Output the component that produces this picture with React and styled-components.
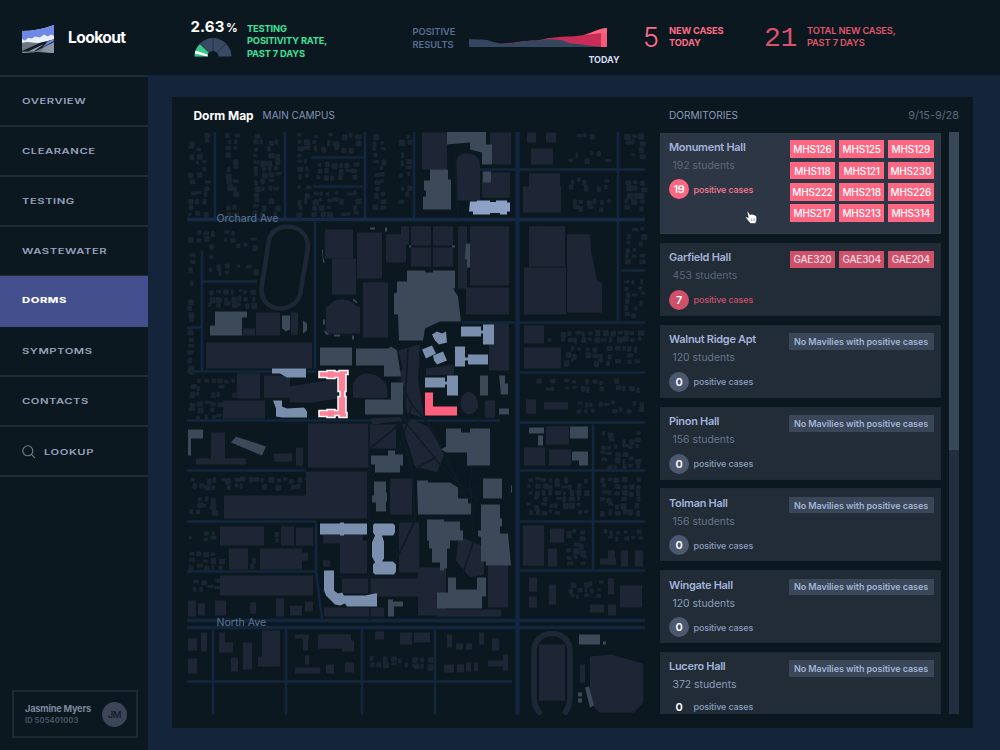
import React from "react";
import styled, { createGlobalStyle } from "styled-components";

const GlobalStyle = createGlobalStyle`
  * { box-sizing: border-box; }
  body { margin: 0; background: #0c1820; font-family: Inter, "Liberation Sans", sans-serif; overflow: hidden; }
`;

const Page = styled.div`
  width: 1000px; height: 750px; display: grid;
  grid-template: 75px 675px / 148px 852px; background: #0c1820;
  white-space: nowrap;
`;
const Brand = styled.div`
  display: flex; align-items: center; padding: 4px 0 0 22px; gap: 14px;
`;
const BrandName = styled.span`
  color: #fff; font-size: 15.6px; font-weight: 700; letter-spacing: -0.6px; line-height: 20px; margin-top: -3px;
`;
const Stats = styled.header`
  display: flex; align-items: flex-start; padding-left: 42px;
`;
const Rate = styled.div`
  width: 57px; padding-top: 16.5px; display: flex; flex-direction: column; align-items: flex-start;
`;
const RateValue = styled.div`
  color: #fff; font-size: 15px; font-weight: 700; letter-spacing: 0.15px; line-height: 19px; padding-left: 0.5px;
  height: 21px; small { font-size: 11.5px; margin-left: 1.5px; }
`;
const StatLabel = styled.div`
  font-size: 9.3px; font-weight: ${(p) => p.$weight || 700}; line-height: 12.6px;
  letter-spacing: ${(p) => p.$ls ?? -0.15}px; white-space: pre;
  color: ${(p) => p.$color}; width: ${(p) => p.$w}px; padding-top: ${(p) => p.$top}px;
`;
const Trend = styled.div`
  width: 175px; padding-top: 26px; display: flex; flex-direction: column;
`;
const Today = styled.div`
  color: #d3dcf5; font-size: 9px; font-weight: 700; line-height: 12px; padding: 6px 0 0 119.5px; letter-spacing: -0.1px;
`;
const Count = styled.div`
  font: ${(p) => (p.$mono ? '400 28px/30px "Liberation Mono", monospace' : '300 27px/30px Inter, sans-serif')};
  color: ${(p) => p.$color}; width: ${(p) => p.$w}px; padding-top: ${(p) => (p.$mono ? 24 : 22.5)}px;
  margin-left: ${(p) => (p.$mono ? 0 : -1)}px;
  letter-spacing: ${(p) => (p.$mono ? "-0.4px" : 0)};
`;

const Sidebar = styled.nav`
  display: flex; flex-direction: column; border-top: 2px solid #212c36; width: 148px;
`;
const NavItem = styled.div`
  height: ${(p) => (p.$active ? 51 : 50)}px; margin-top: ${(p) => (p.$active ? -1 : 0)}px;
  padding: ${(p) => (p.$low ? 2 : 0)}px 0 0 22px; display: flex; align-items: center; gap: 8px;
  border-bottom: 2px solid ${(p) => (p.$active ? "#434f8b" : "#212c36")};
  background: ${(p) => (p.$active ? "#43508d" : "transparent")};
  color: ${(p) => (p.$active ? "#fff" : "#97a2bd")};
`;
const NavText = styled.span`
  font-size: 7.5px; font-weight: ${(p) => (p.$active ? 800 : 600)}; letter-spacing: 0.35px;
  transform: scaleX(1.5); transform-origin: left center; line-height: 12px; padding-top: 1px;
`;
const User = styled.div`
  margin: auto 10px 12px 12px; height: 48px; border: 2px solid #1e2a33;
  display: flex; align-items: center; padding: 0 9px 0 11px; justify-content: space-between;
`;
const UserName = styled.div`
  color: #7c869c; font-size: 9.2px; font-weight: 700; line-height: 13px; letter-spacing: -0.2px;
`;
const UserId = styled.div`
  color: #485262; font-size: 7.5px; font-weight: 700; line-height: 12px; letter-spacing: 0.1px;
`;
const Avatar = styled.div`
  width: 25px; height: 25px; border-radius: 50%; background: #3d4559; color: #141e29;
  font-size: 9.5px; font-weight: 600; display: grid; place-items: center; letter-spacing: -0.3px;
`;

const Main = styled.main`
  background: #13243b; padding: 22px 27px 22px 24px;
`;
const Panel = styled.section`
  width: 801px; height: 631px; background: #0b1820; display: flex; padding-left: 8px;
`;
const MapColumn = styled.div` width: 480px; `;
const MapHeader = styled.div`
  height: 35px; padding: 0 0 0 13.5px; display: flex; align-items: center; gap: 9px;
`;
const Title = styled.h1`
  margin: 0; color: #fff; font-size: 12px; font-weight: 700; letter-spacing: -0.05px; padding-top: 1px;
`;
const SubTitle = styled.span`
  color: ${(p) => p.$color || "#8492b8"}; font-size: ${(p) => p.$size || 10}px;
  letter-spacing: ${(p) => p.$ls || 0}px; padding-top: 1px;
`;
const MapSvg = styled.svg` display: block; `;
const Side = styled.div` width: 299px; `;
const SideHeader = styled.div`
  height: 35px; padding: 0 0 0 9px; display: flex; align-items: center; justify-content: space-between;
`;
const ScrollArea = styled.div`
  display: flex; justify-content: space-between; height: 581.5px; overflow: hidden;
`;
const List = styled.div`
  width: 281px; display: flex; flex-direction: column; gap: 8.75px; padding-top: 1px;
`;
const Track = styled.div` width: 10px; background: #232f40; `;
const Thumb = styled.div` height: 318px; background: #394857; `;

const Card = styled.article`
  flex: none; height: ${(p) => (p.$hover ? 101.3 : 73)}px; background: ${(p) => (p.$hover ? "#2d3644" : "#212c37")};
  box-shadow: inset 0 0 0 1px ${(p) => (p.$hover ? "#313c49" : "#1e2b34")};
  display: flex; justify-content: space-between; padding: ${(p) => (p.$low ? 7.7 : 7)}px 7.5px 0 9px;
`;
const DormName = styled.div`
  color: #a3b3d9; font-size: 11px; font-weight: 600; line-height: 14px; letter-spacing: -0.3px;
`;
const Students = styled.div`
  color: ${(p) => p.$color}; font-size: 10.4px; line-height: 14px; padding: 0 0 0 3.5px; margin-top: 4.8px;
`;
const Cases = styled.div`
  display: flex; align-items: center; gap: 4.5px; height: 20px; margin-top: ${(p) => p.$top}px;
  font-size: 9px; font-weight: 500; letter-spacing: -0.13px; color: ${(p) => p.$color};
`;
const CaseCount = styled.span`
  width: 20px; height: 20px; border-radius: 50%; background: ${(p) => p.$bg}; color: #fff;
  font-size: 11px; font-weight: 600; display: grid; place-items: center; letter-spacing: -0.3px;
`;
const Rooms = styled.div`
  display: grid; grid-template-columns: repeat(3, 45.4px); column-gap: 3.8px; row-gap: 3.5px;
  grid-auto-rows: ${(p) => (p.$hover ? 17.9 : 16.8)}px; margin-top: ${(p) => (p.$hover ? 0.2 : 1)}px;
`;
const Room = styled.div`
  background: ${(p) => p.$bg}; color: ${(p) => p.$color}; font-size: 10px; letter-spacing: -0.2px;
  display: grid; place-items: center; font-weight: 500;
`;
const NoCases = styled.div`
  width: 145px; height: 16.5px; margin-top: 1px; background: #3a4758; color: #a3b4d6; font-size: 9px; font-weight: 600;
  display: grid; place-items: center; letter-spacing: -0.06px;
`;
const CursorSvg = styled.svg` position: absolute; left: 744px; top: 209px; `;
const GaugeSvg = styled.svg` margin-left: 3.5px; `;

const Logo = () => (
  <svg width="32" height="29" viewBox="0 0 32 29">
    <path d="M0 6Q16 6 32 0V28Q16 26 0 28Z" fill="#eaf0fb" />
    <path d="M0 6Q16 6 32 0V11L29 9.500L26 11.500L22 9.500L18 12.500L13 11.500L10 13.500L6 13L3 15.500L0 14Z" fill="#6f8ae6" />
    <path d="M0 18C6 16 10 18 15 18C21 18 26 16 32 14V28Q16 26 0 28Z" fill="#6d7683" />
    <path d="M26 17L32 14.500V28Q26 26.500 19 26.500Z" fill="#8b95a8" />
    <path d="M19 17.500L32 14.500V17L13 26.500H0V26Z" fill="#111c26" />
    <path d="M24 17L32 14V16L20 22.500L25 17.500Z" fill="#6b86dd" />
    <path d="M6 26.500L22 19L12 26.500Z" fill="#8b95a5" />
  </svg>
);

const Gauge = () => (
  <GaugeSvg width="38" height="19" viewBox="0 0 38 19">
    <path d="M0.500 18.500A18.500 18.500 0 0 1 37.500 18.500H24.500A5.500 5.500 0 0 0 13.500 18.500Z" fill="#394a64" />
    <path d="M0.500 18.500A18.500 18.500 0 0 1 6 6L14.500 14A6 6 0 0 0 13.500 18.500Z" fill="#36c987" />
    <path d="M1.500 12.500L13.600 16.500V18.500L0.800 15.500Z" fill="#fff" />
    <g stroke="#1d2a39" strokeWidth=".8">
      <path d="M6 5.500L15 14.500M19 0V13M32 5.500L23 14.500" />
    </g>
  </GaugeSvg>
);

const TrendChart = () => (
  <svg width="138" height="22" viewBox="469 26 138 22">
    <path d="M500 44C512 43 524 41 532 40.500C540 41 545 38 552 37.700C566 36 576 37 586 34.500C594 32 600 28 607 28V47H500Z" fill="#c72d57" />
    <path d="M584 35C594 32 600 28 607 28V33H601Q594 34 584 35Z" fill="#ff6480" />
    <path d="M469 39C478 40 483 38.500 489 40.500C495 43 500 43.500 508 43.500C518 43 522 41 530 40.800C540 41 545 39 552 39.300C560 39.500 566 41 570 43.500C580 43.500 584 46 601 46.500V47H469Z" fill="#35465f" />
    <path d="M601 30L607 28V47H601Z" fill="#ff6480" opacity=".85" />
  </svg>
);

const SearchIcon = () => (
  <svg width="14" height="14" viewBox="0 0 14 14" fill="none" stroke="#747e88" strokeWidth="1.1">
    <circle cx="5.800" cy="5.800" r="5" />
    <path d="M9.400 9.400L12.800 12.800" />
  </svg>
);

// Blocks filled with a scatter of small houses: x, y, width, height
const HOUSE_BLOCKS = [
  [188, 132, 19, 82], [225, 132, 14, 82], [252, 132, 26, 82], [296, 132, 12, 82], [312, 132, 46, 18], [316, 160, 42, 20],
  [311, 190, 50, 24], [372, 132, 11, 80], [398, 132, 11, 82], [188, 229, 24, 10], [208, 229, 50, 16], [187, 252, 9, 120],
  [208, 253, 8, 20], [216, 262, 42, 10], [208, 288, 50, 16],
  [188, 377, 48, 18], [188, 400, 32, 18], [190, 476, 118, 14], [188, 495, 30, 18], [188, 529, 30, 14], [188, 550, 38, 16],
  [192, 578, 26, 10], [266, 530, 14, 12], [250, 550, 8, 16], [567, 132, 45, 8], [568, 150, 45, 10], [568, 177, 44, 14],
  [571, 198, 42, 10], [624, 132, 20, 28], [624, 178, 20, 32], [624, 226, 20, 38], [624, 278, 20, 38], [545, 329, 98, 9],
  [563, 345, 80, 20], [536, 378, 108, 14], [575, 400, 68, 12], [599, 430, 44, 35], [526, 476, 62, 40], [599, 476, 44, 40],
  [565, 528, 24, 38], [601, 528, 42, 14], [568, 580, 36, 20], [368, 655, 52, 15], [412, 655, 22, 15],
];
const HOUSES = (() => {
  let seed = 17;
  const next = () => ((seed = (seed * 16807) % 2147483647) / 2147483647);
  const out = [];
  HOUSE_BLOCKS.forEach(([x, y, w, h]) => {
    for (let cy = y; cy < y + h - 2; cy += 6.5) {
      for (let cx = x; cx < x + w - 3; cx += 7) {
        if (next() < 0.24) continue;
        out.push([cx + next() * 3, cy + next() * 2.5, 3 + next() * 3.5, 3 + next() * 3.5]);
      }
    }
  });
  return out;
})();

const ROADS = [
  "M215 131V218M285 131V218M365 131V218M414 131V218", "M311 157H365M313 186H363", "M202 250V371M202 281H257M315 221V368",
  "M187 371H316M187 327H202M187 420H500M187 470H306M187 521H316M187 571H315M316 521V571L322 618",
  "M479 169H645M618 131V320M621 270H645M462 322H645M520 372H645M520 422H645M520 470H645M520 521H645M593 424V570M520 570H645",
  "M213 628V714M286 628V714M362 628V714M435 628V714M187 681H512",
];
const PATHS = [
  "M395 372L412 404L430 425L475 515M400 415L445 470L478 500M408 348L404 420L370 448M412 404L400 447L372 475",
  "M398 420L412 470L437 456M412 470L415 520L396 560M440 500L478 485M369 420V520H415M478 420L470 480L474 540L462 575",
  "M338 576H418M370 576V620M455 152L458 218M425 519H475",
];
// Lots and fields: x, y, width, height
const LOTS = [
  [422, 132, 25, 37], [490, 132, 21, 32], [482, 172, 28, 25], [529, 173, 31, 18], [523, 186, 38, 26], [531, 148, 22, 16],
  [527, 132, 9, 10], [546, 132, 10, 10], [325, 229, 28, 29], [332, 258, 24, 36], [357, 232, 25, 46], [386, 234, 20, 28],
  [401, 226, 8, 18], [411, 226, 20, 19], [433, 226, 20, 19], [411, 247, 20, 19], [433, 247, 20, 19], [458, 226, 9, 62],
  [470, 226, 39, 59], [466, 287, 43, 27], [529, 226, 36, 40], [524, 267, 42, 47], [363, 282, 25, 55], [326, 306, 34, 27],
  [256, 312, 24, 23], [291, 312, 7, 22], [243, 328, 12, 7], [206, 342, 106, 26], [237, 373, 23, 25], [264, 375, 26, 22],
  [223, 400, 42, 18], [353, 382, 33, 15], [211, 432, 14, 31], [196, 458, 50, 6], [296, 447, 7, 18], [274, 453, 18, 8],
  [308, 423, 60, 44], [306, 471, 61, 44], [224, 495, 143, 23], [370, 424, 26, 24], [390, 478, 22, 36], [489, 323, 20, 47],
  [485, 400, 10, 17], [524, 325, 20, 18], [524, 347, 37, 21], [526, 399, 10, 14], [544, 402, 24, 7], [546, 426, 23, 18],
  [524, 447, 21, 18], [549, 449, 22, 16], [220, 526, 44, 19], [281, 526, 13, 19], [296, 527, 17, 18], [229, 548, 19, 21],
  [260, 548, 42, 21], [302, 552, 6, 8], [220, 575, 93, 20], [340, 540, 27, 33], [323, 534, 40, 9], [323, 560, 7, 6],
  [342, 578, 26, 15], [370, 578, 50, 18], [324, 607, 60, 9], [399, 522, 20, 50], [488, 565, 20, 42], [418, 567, 28, 48],
  [437, 609, 64, 7], [523, 525, 21, 40], [550, 528, 14, 14], [548, 548, 9, 18], [600, 558, 16, 6], [608, 550, 7, 14],
  [621, 550, 7, 16], [635, 550, 8, 16], [529, 577, 8, 14], [529, 596, 8, 11], [549, 584, 7, 20], [608, 578, 6, 16],
  [620, 585, 22, 22], [590, 604, 14, 8], [608, 604, 8, 11], [188, 600, 8, 16], [198, 603, 7, 12], [215, 600, 11, 15],
  [250, 602, 6, 11], [276, 598, 8, 18], [290, 605, 12, 10], [305, 601, 8, 10], [188, 638, 9, 12], [201, 632, 6, 19],
  [219, 632, 6, 20], [225, 642, 8, 10], [188, 658, 9, 15], [231, 657, 7, 14], [243, 642, 9, 27], [262, 630, 18, 36],
  [258, 656, 10, 10], [295, 634, 14, 4], [303, 638, 5, 12], [305, 655, 4, 9], [295, 667, 25, 6], [326, 664, 8, 9],
  [318, 634, 33, 14], [342, 640, 12, 11], [345, 662, 9, 10], [375, 631, 9, 8], [400, 632, 12, 12], [414, 632, 16, 10],
  [447, 634, 5, 13], [456, 643, 7, 6], [466, 643, 6, 6], [479, 632, 5, 12], [492, 638, 7, 12], [488, 660, 20, 6],
  [503, 654, 5, 16], [444, 664, 10, 8], [457, 664, 7, 8], [466, 662, 5, 9], [474, 662, 4, 9], [580, 664, 5, 18],
];
const LOT_SHAPES = [
  "M456 164Q456 153 466 153Q480 153 480 166V200H456Z", "M326 312Q330 298 343 299Q356 300 360 312Z",
  "M353 385Q357 373 367 373Q383 374 387 388V397H353Z", "M290 386L338 378V398L312 402H290Z", "M543 226H565V240H543Z",
  "M567 234H590L591 250L594 265L597 280L602 283V312H567Z", "M468 391Q479 394 478 407Q472 418 463 411Q457 396 468 391Z",
  "M400 372L412 352L420 345L418 378L424 418L407 412Z", "M402 424L414 420L428 426L445 452L437 472L415 466Z",
  "M458 540L464 538L484 546L484 574L470 577L456 560Z", "M590 656L611 654L643 663V702L634 712H599L590 700Z",
  "M398 350L420 344L416 366L404 372Z", "M371 418L404 416V420L372 424Z", "M426 368L454 364V374L426 375Z",
];
// Academic buildings
const BUILDINGS = [
  "M447 131H486V144H492V164H482V152L470 149V142L447 144Z", "M430 169H448V179H451V209H423V196H426V190H424V180H430Z",
  "M483 171H491V182H483Z", "M466 243H470V267H467V259H465Z",
  "M407 270H425V272H433V270H455V288H453L458 296L461 321L440 321L425 328L423 340H399L398 314H394V293L397 292V281H407Z",
  "M215 311H247V317H242V335H210V325H215Z", "M282 315H290V329L286 331L282 328Z", "M303 320L307 323V330L303 333Z",
  "M320 347H352V365H320Z", "M356 348H388L391 346L397 350L401 376H384V365H356Z", "M391 382H403V414H365V399H391Z",
  "M188 429H203V438H191V455H188Z", "M236 436L266 446L262 455L231 442Z", "M480 375H488V395H480Z", "M499 375H505V383H508V394H501Z",
  "M499 408H509V414H499Z", "M446 428H461V432H470V428H490V465H467V452H447L441 449L446 446Z", "M483 478H502V498H483Z",
  "M417 480H428V482H450L458 487V498H468V503H471V514H418Z",
  "M371 455H388V450H395V454H403V465H400V472H375V464H371Z", "M374 481H386V492H387V501H386V511H376V502H372V495H374Z",
  "M427 519H444V521H460V530H463V540H450V548H447V568H444V570H440V562H432V548H429V540H427Z",
  "M481 504H500V518H502V526H500V533H508L511 565H486V561H481V536H478V530H481Z",
  "M448 577H456V589H477V577H486V596H482V608H437V592H448Z", "M529 427H544V433H529ZM538 435H543V445H538ZM570 426H588V438H570ZM572 451H588V465H579V460H572Z",
  "M388 599H393V601H403V606H394V616H388Z", "M579 634H600V644H579ZM585 687L589 686L594 705L590 707Z",
];
// Residence halls
const DORMS = [
  "M272 368H306V377H287L280 373H272Z", "M273 400H282V406L287 408L304 407L307 411V417H282L276 416V408Z",
  "M461 326H481V330H483V324H494V344H483V333H481V336H461Z", "M455 346H465V357H468V354H488V364H468V360H465V366H455Z",
  "M425 377H445V381H447V375H458V395H447V384H445V387H425Z",
  "M432 334L437 331L442 333L446 331L447 342L439 344L435 340Z", "M422 349L432 345L436 353L426 358Z", "M433 355L443 351L447 360L437 364L434 360Z",
  "M320 523H340V522H344V523H367V534H344V535H340V534H320Z",
  "M374 523H393L395 525V532L393 535H382L384 541V558L382 561H393L396 564V571L394 574H375L373 572V564L375 562L372 556V542L375 535L373 532V525Z",
  "M324 570H334V590L338 593L342 592L344 595H365L375 593H377V606H347L345 603L340 605L335 604L331 600L326 595L324 590Z",
];

const CampusMap = () => (
  <MapSvg width="475" height="583" viewBox="180 131.500 475 583">
    <g stroke="#12273d" fill="none" strokeWidth="2.500">
      {ROADS.map((d) => <path key={d} d={d} />)}
      <path d="M187 219H645" strokeWidth="3.500" stroke="#162a45" />
      <path d="M187 620H645M187 627H645" strokeWidth="3.500" />
      <path d="M517.500 131V714" strokeWidth="4.500" stroke="#13253f" />
    </g>
    <g fill="#1a2532">
      {HOUSES.map(([x, y, w, h], i) => <rect key={i} x={x} y={y} width={w} height={h} rx="1" />)}
    </g>
    <g fill="#1e2635">
      {LOTS.map(([x, y, w, h], i) => <rect key={i} x={x} y={y} width={w} height={h} />)}
      {LOT_SHAPES.map((d) => <path key={d} d={d} />)}
      <rect x="539" y="644" width="26" height="56" />
    </g>
    <g fill="none" stroke="#1d2736">
      <path d="M268.500 242C271 220 308 220 308 247L300.500 292C297 313 261 315 261.500 288Z" strokeWidth="4.500" />
      <path d="M541 714Q534 706 534 697V651C534 627 570 627 570 651V697Q570 706 564 714" strokeWidth="5.500" />
    </g>
    <g fill="none" stroke="#0f1b27" strokeWidth="1.800">{PATHS.map((d) => <path key={d} d={d} />)}</g>
    <g fill="#3b4958">
      {BUILDINGS.map((d) => <path key={d} d={d} />)}
      <path d="M370 227H375V229H370ZM385 227H387V231H385ZM409 245H411V247H409ZM452 245H455V247H452ZM353 298L357 301V303L353 300ZM323 319H325V324H323ZM323 329L326 334H330M334 334H340V336H334ZM352 335H354V339H352ZM578 692H582V696H578ZM578 698H582V702H578ZM603 641H606V644H603ZM511 485H512V492H511ZM322 249H323V256L325 262H323Z" />
    </g>
    <g fill="#7a8eae">
      {DORMS.map((d) => <path key={d} d={d} />)}
    </g>
    <path d="M470 201H477V200H490V201.500H496V200H507V202H510V211H507V214H500V212.500H490V214H473V211H469Z" fill="#8ca1c5" />
    <path
      d="M319 371H327V370H335V371H339V370H348V374H346V391H345V396H346V412H347V417H339V415H335V417H327V416H319V410H327V409H335V410H338V396H340V391H338V377H335V378H327V377H319Z"
      fill="#ff8197" stroke="#fff" strokeWidth="1.500"
    />
    <path d="M425 392H433V406H457V415H425Z" fill="#ff5f7d" />
    <g fontFamily="Inter, sans-serif" fontSize="10.600" fill="#5d7290">
      <text x="216.500" y="221.500">Orchard Ave</text>
      <text x="216.500" y="625.500">North Ave</text>
    </g>
  </MapSvg>
);

const Cursor = () => (
  <CursorSvg width="14" height="16" viewBox="0 0 14 16">
    <path d="M3 2.500C4.200 2 5 3.500 5.800 5.500L8 5.200L10 5.700L12.500 7L12.800 11L11.500 14.500H6.500L3 10.500L1.500 8.300C2 7.500 3.500 8 4.300 8.600Z" fill="#fff" stroke="#222c39" strokeWidth=".6" />
    <path d="M7.500 9.500V12M9.200 9.500V12M10.800 9.500V12" stroke="#7c8590" strokeWidth=".6" />
  </CursorSvg>
);

const NAV = ["OVERVIEW", "CLEARANCE", "TESTING", "WASTEWATER", "DORMS", "SYMPTOMS", "CONTACTS"];
const DORM_LIST = [
  { name: "Monument Hall", students: 192, cases: 19, hover: true, dot: "#ff6681", text: "#fb7a92", dim: "#5f697a", top: 6.5,
    rooms: ["MHS126", "MHS125", "MHS129", "MHS118", "MHS121", "MHS230", "MHS222", "MHS218", "MHS226", "MHS217", "MHS213", "MHS314"] },
  { name: "Garfield Hall", students: 453, cases: 7, dot: "#d05069", text: "#cf506b", dim: "#5c6778", rooms: ["GAE320", "GAE304", "GAE204"] },
  { name: "Walnut Ridge Apt", students: 120, cases: 0, dim: "#68758c" },
  { name: "Pinon Hall", students: 156, cases: 0, dim: "#68758c" },
  { name: "Tolman Hall", students: 156, cases: 0, dim: "#68758c" },
  { name: "Wingate Hall", students: 120, cases: 0, dim: "#8c9cbd" },
  { name: "Lucero Hall", students: 372, cases: 0, dim: "#8c9cbd", dot: "transparent", top: 4.5 },
];

export default function App() {
  return (
    <Page>
      <GlobalStyle />
      <Brand><Logo /><BrandName>Lookout</BrandName></Brand>
      <Stats>
        <Rate>
          <RateValue>2.63<small>%</small></RateValue>
          <Gauge />
        </Rate>
        <StatLabel $color="#3fe09a" $w={165.500} $top={22.700}>{"TESTING\nPOSITIVITY RATE,\nPAST 7 DAYS"}</StatLabel>
        <StatLabel $color="#587093" $w={56.500} $top={26} $weight={600} $ls={0}>{"POSITIVE\nRESULTS"}</StatLabel>
        <Trend><TrendChart /><Today>TODAY</Today></Trend>
        <Count $color="#ff6e86" $w={26}>5</Count>
        <StatLabel $color="#ff6b86" $w={95} $top={24.800}>{"NEW CASES\nTODAY"}</StatLabel>
        <Count $color="#d9536d" $w={43} $mono>21</Count>
        <StatLabel $color="#e0566f" $w={110} $top={24.800} $weight={600}>{"TOTAL NEW CASES,\nPAST 7 DAYS"}</StatLabel>
      </Stats>
      <Sidebar>
        {NAV.map((n) => (
          <NavItem key={n} $active={n === "DORMS"}><NavText $active={n === "DORMS"}>{n}</NavText></NavItem>
        ))}
        <NavItem $low><SearchIcon /><NavText>LOOKUP</NavText></NavItem>
        <User>
          <div><UserName>Jasmine Myers</UserName><UserId>ID 505401003</UserId></div>
          <Avatar>JM</Avatar>
        </User>
      </Sidebar>
      <Main>
        <Panel>
          <MapColumn>
            <MapHeader><Title>Dorm Map</Title><SubTitle>MAIN CAMPUS</SubTitle></MapHeader>
            <CampusMap />
          </MapColumn>
          <Side>
            <SideHeader>
              <SubTitle $color="#8b9aba" $size={10.100}>DORMITORIES</SubTitle>
              <SubTitle $color="#5d687c" $size={10.900}>9/15-9/28</SubTitle>
            </SideHeader>
            <ScrollArea>
              <List>
                {DORM_LIST.map((d) => (
                  <Card key={d.name} $hover={d.hover} $low={!d.rooms}>
                    <div>
                      <DormName>{d.name}</DormName>
                      <Students $color={d.dim}>{d.students} students</Students>
                      <Cases $color={d.text || "#8d9dbf"} $top={d.top || (d.rooms ? 7 : 6.500)}>
                        <CaseCount $bg={d.dot || "#4b586f"}>{d.cases}</CaseCount>
                        positive cases
                      </Cases>
                    </div>
                    {d.rooms ? (
                      <Rooms $hover={d.hover}>
                        {d.rooms.map((r) => <Room key={r} $bg={d.dot} $color={d.hover ? "#fff" : "#f3dde6"}>{r}</Room>)}
                      </Rooms>
                    ) : (
                      <NoCases>No Mavilies with positive cases</NoCases>
                    )}
                  </Card>
                ))}
              </List>
              <Track><Thumb /></Track>
            </ScrollArea>
          </Side>
        </Panel>
      </Main>
      <Cursor />
    </Page>
  );
}
